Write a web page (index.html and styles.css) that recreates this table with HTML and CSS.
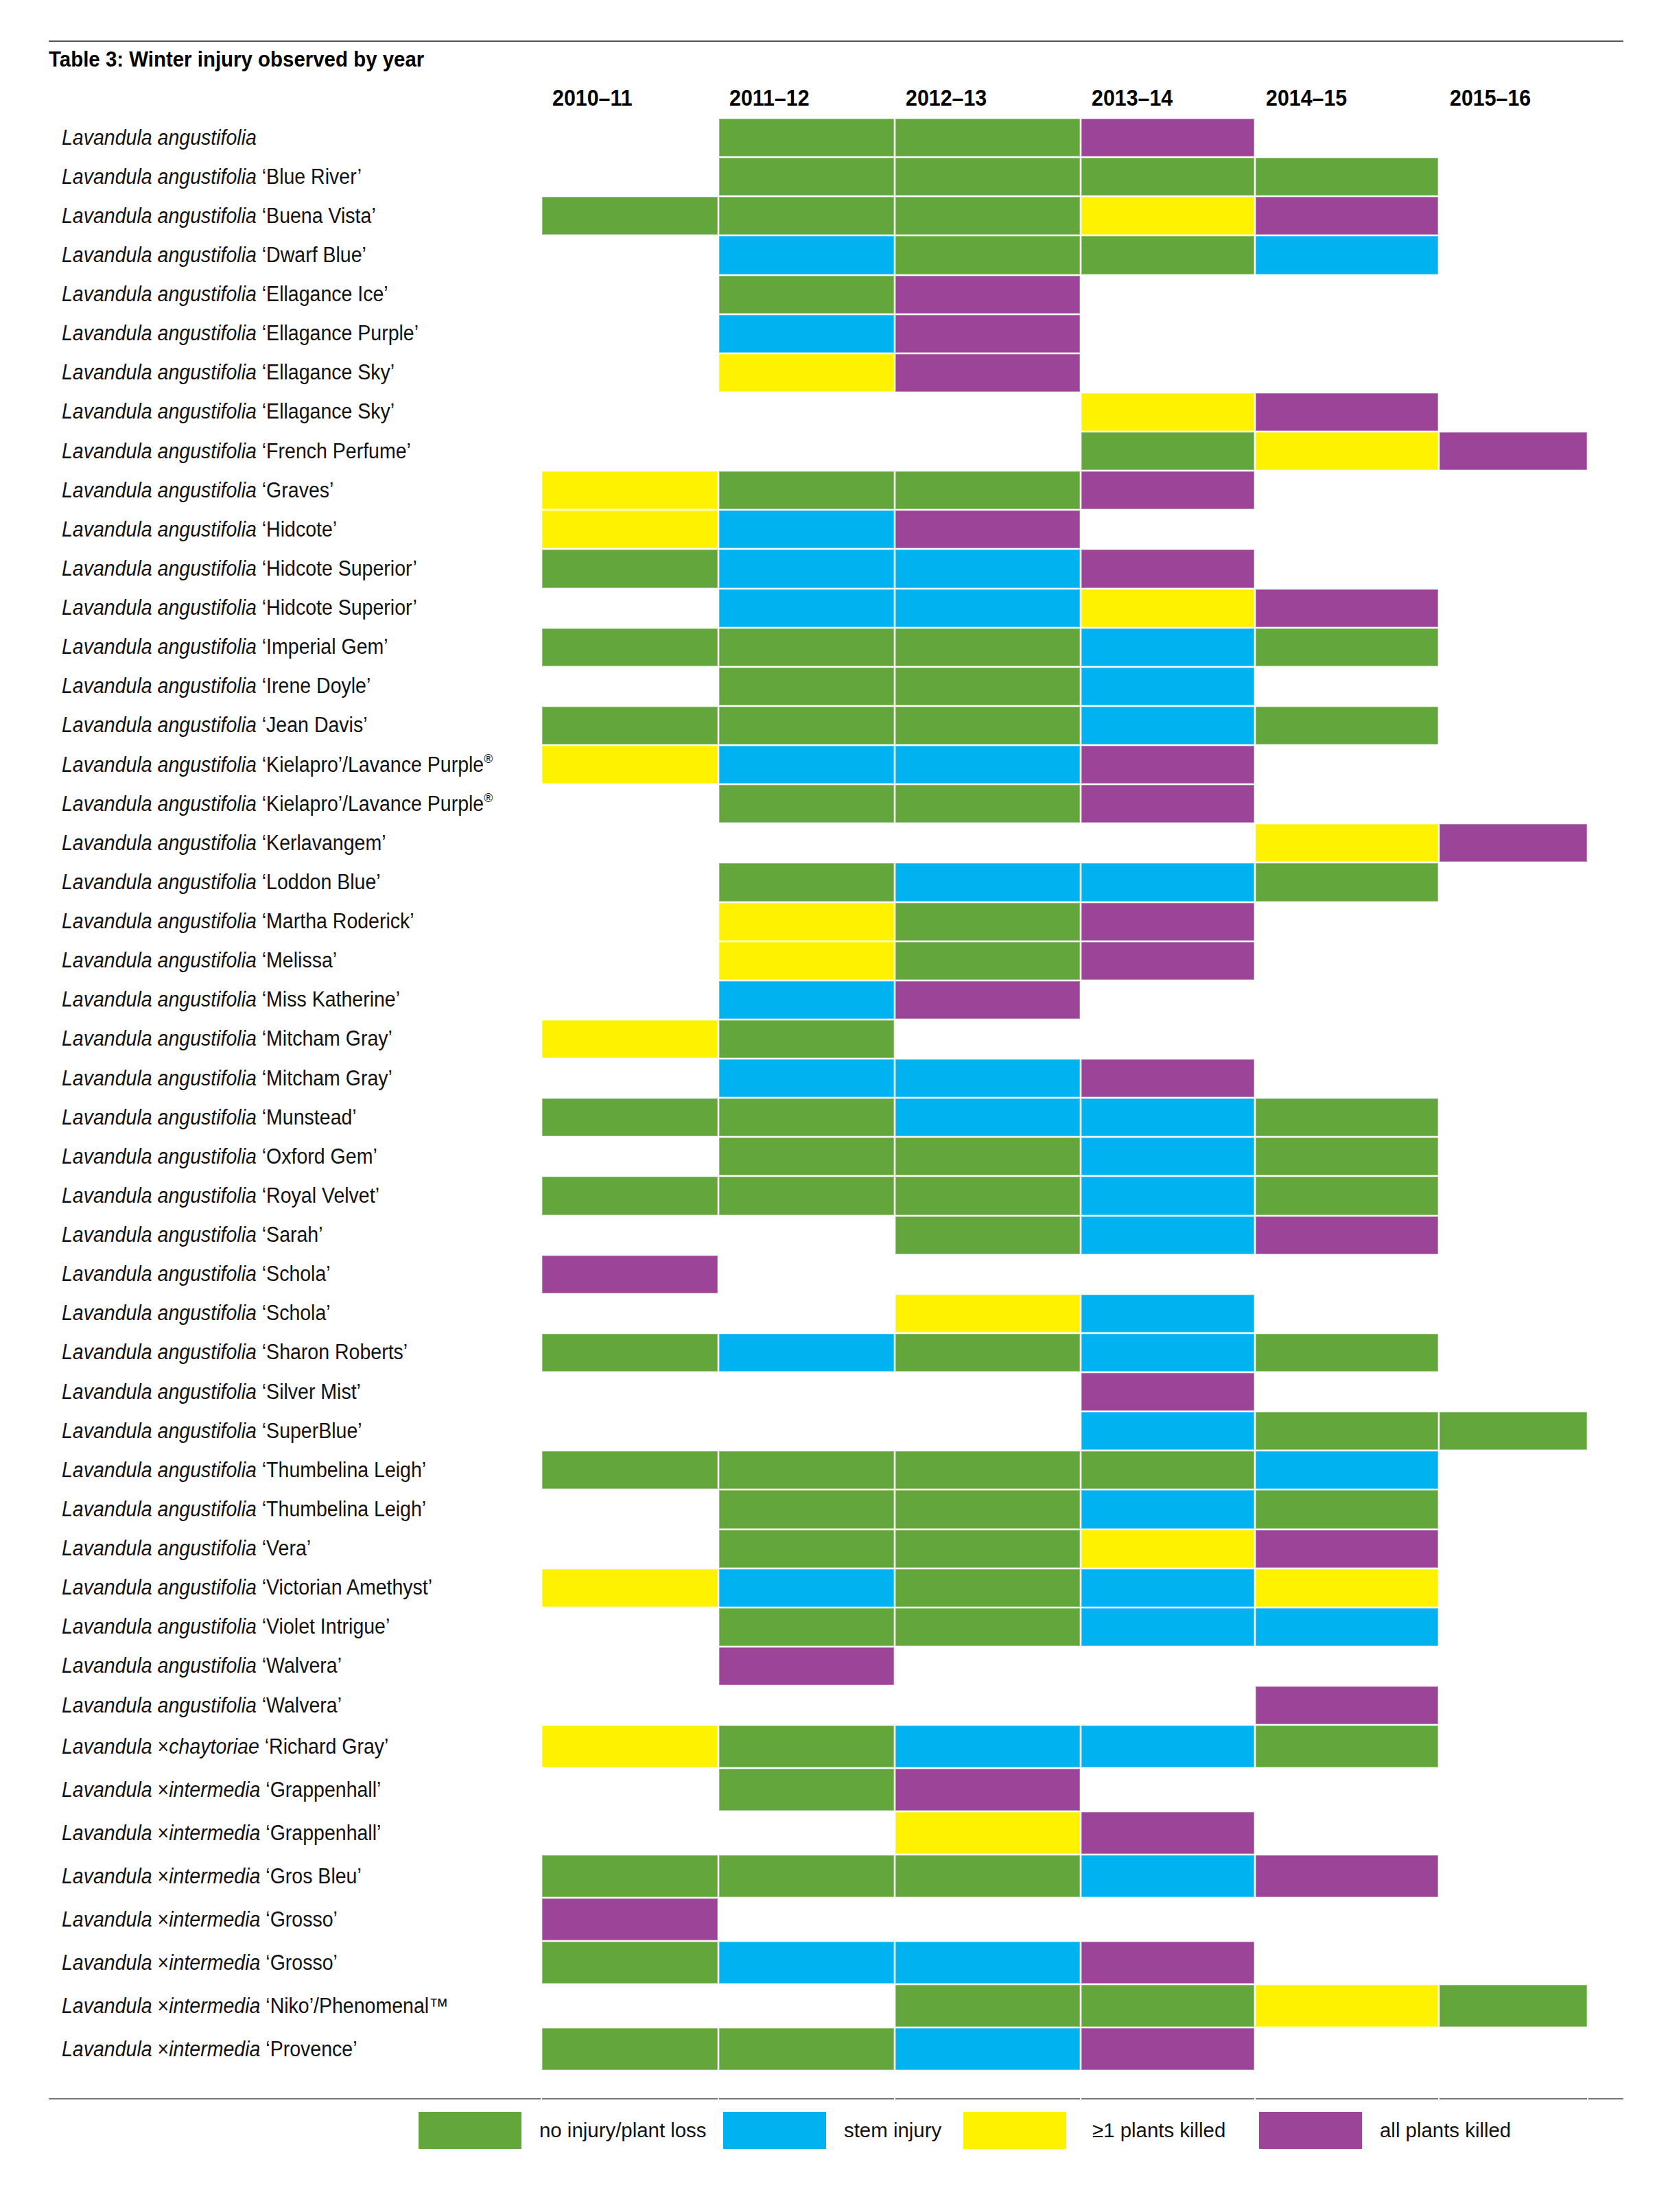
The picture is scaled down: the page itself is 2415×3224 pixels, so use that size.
FILE: index.html
```html
<!DOCTYPE html>
<html lang="en">
<head>
<meta charset="utf-8">
<title>Table 3: Winter injury observed by year</title>
<link rel="stylesheet" href="styles.css">
</head>
<body>
<div class="page">
  <div class="rule-top"></div>
  <h1 class="title"><span class="nm">Table 3: Winter injury observed by year</span></h1>

  <div class="table">
    <div class="hd"></div>
    <div class="hd yr"><span class="nm">2010–11</span></div>
    <div class="hd yr"><span class="nm">2011–12</span></div>
    <div class="hd yr"><span class="nm">2012–13</span></div>
    <div class="hd yr"><span class="nm">2013–14</span></div>
    <div class="hd yr"><span class="nm">2014–15</span></div>
    <div class="hd yr"><span class="nm">2015–16</span></div>

    <div class="lab"><span class="nm"><i>Lavandula angustifolia</i></span></div>
    <div class="c"></div><div class="c g"></div><div class="c g"></div><div class="c p"></div><div class="c"></div><div class="c"></div>

    <div class="lab"><span class="nm"><i>Lavandula angustifolia</i> ‘Blue River’</span></div>
    <div class="c"></div><div class="c g"></div><div class="c g"></div><div class="c g"></div><div class="c g"></div><div class="c"></div>

    <div class="lab"><span class="nm"><i>Lavandula angustifolia</i> ‘Buena Vista’</span></div>
    <div class="c g"></div><div class="c g"></div><div class="c g"></div><div class="c y"></div><div class="c p"></div><div class="c"></div>

    <div class="lab"><span class="nm"><i>Lavandula angustifolia</i> ‘Dwarf Blue’</span></div>
    <div class="c"></div><div class="c b"></div><div class="c g"></div><div class="c g"></div><div class="c b"></div><div class="c"></div>

    <div class="lab"><span class="nm"><i>Lavandula angustifolia</i> ‘Ellagance Ice’</span></div>
    <div class="c"></div><div class="c g"></div><div class="c p"></div><div class="c"></div><div class="c"></div><div class="c"></div>

    <div class="lab"><span class="nm"><i>Lavandula angustifolia</i> ‘Ellagance Purple’</span></div>
    <div class="c"></div><div class="c b"></div><div class="c p"></div><div class="c"></div><div class="c"></div><div class="c"></div>

    <div class="lab"><span class="nm"><i>Lavandula angustifolia</i> ‘Ellagance Sky’</span></div>
    <div class="c"></div><div class="c y"></div><div class="c p"></div><div class="c"></div><div class="c"></div><div class="c"></div>

    <div class="lab"><span class="nm"><i>Lavandula angustifolia</i> ‘Ellagance Sky’</span></div>
    <div class="c"></div><div class="c"></div><div class="c"></div><div class="c y"></div><div class="c p"></div><div class="c"></div>

    <div class="lab"><span class="nm"><i>Lavandula angustifolia</i> ‘French Perfume’</span></div>
    <div class="c"></div><div class="c"></div><div class="c"></div><div class="c g"></div><div class="c y"></div><div class="c p"></div>

    <div class="lab"><span class="nm"><i>Lavandula angustifolia</i> ‘Graves’</span></div>
    <div class="c y"></div><div class="c g"></div><div class="c g"></div><div class="c p"></div><div class="c"></div><div class="c"></div>

    <div class="lab"><span class="nm"><i>Lavandula angustifolia</i> ‘Hidcote’</span></div>
    <div class="c y"></div><div class="c b"></div><div class="c p"></div><div class="c"></div><div class="c"></div><div class="c"></div>

    <div class="lab"><span class="nm"><i>Lavandula angustifolia</i> ‘Hidcote Superior’</span></div>
    <div class="c g"></div><div class="c b"></div><div class="c b"></div><div class="c p"></div><div class="c"></div><div class="c"></div>

    <div class="lab"><span class="nm"><i>Lavandula angustifolia</i> ‘Hidcote Superior’</span></div>
    <div class="c"></div><div class="c b"></div><div class="c b"></div><div class="c y"></div><div class="c p"></div><div class="c"></div>

    <div class="lab"><span class="nm"><i>Lavandula angustifolia</i> ‘Imperial Gem’</span></div>
    <div class="c g"></div><div class="c g"></div><div class="c g"></div><div class="c b"></div><div class="c g"></div><div class="c"></div>

    <div class="lab"><span class="nm"><i>Lavandula angustifolia</i> ‘Irene Doyle’</span></div>
    <div class="c"></div><div class="c g"></div><div class="c g"></div><div class="c b"></div><div class="c"></div><div class="c"></div>

    <div class="lab"><span class="nm"><i>Lavandula angustifolia</i> ‘Jean Davis’</span></div>
    <div class="c g"></div><div class="c g"></div><div class="c g"></div><div class="c b"></div><div class="c g"></div><div class="c"></div>

    <div class="lab"><span class="nm"><i>Lavandula angustifolia</i> ‘Kielapro’/Lavance Purple<sup>®</sup></span></div>
    <div class="c y"></div><div class="c b"></div><div class="c b"></div><div class="c p"></div><div class="c"></div><div class="c"></div>

    <div class="lab"><span class="nm"><i>Lavandula angustifolia</i> ‘Kielapro’/Lavance Purple<sup>®</sup></span></div>
    <div class="c"></div><div class="c g"></div><div class="c g"></div><div class="c p"></div><div class="c"></div><div class="c"></div>

    <div class="lab"><span class="nm"><i>Lavandula angustifolia</i> ‘Kerlavangem’</span></div>
    <div class="c"></div><div class="c"></div><div class="c"></div><div class="c"></div><div class="c y"></div><div class="c p"></div>

    <div class="lab"><span class="nm"><i>Lavandula angustifolia</i> ‘Loddon Blue’</span></div>
    <div class="c"></div><div class="c g"></div><div class="c b"></div><div class="c b"></div><div class="c g"></div><div class="c"></div>

    <div class="lab"><span class="nm"><i>Lavandula angustifolia</i> ‘Martha Roderick’</span></div>
    <div class="c"></div><div class="c y"></div><div class="c g"></div><div class="c p"></div><div class="c"></div><div class="c"></div>

    <div class="lab"><span class="nm"><i>Lavandula angustifolia</i> ‘Melissa’</span></div>
    <div class="c"></div><div class="c y"></div><div class="c g"></div><div class="c p"></div><div class="c"></div><div class="c"></div>

    <div class="lab"><span class="nm"><i>Lavandula angustifolia</i> ‘Miss Katherine’</span></div>
    <div class="c"></div><div class="c b"></div><div class="c p"></div><div class="c"></div><div class="c"></div><div class="c"></div>

    <div class="lab"><span class="nm"><i>Lavandula angustifolia</i> ‘Mitcham Gray’</span></div>
    <div class="c y"></div><div class="c g"></div><div class="c"></div><div class="c"></div><div class="c"></div><div class="c"></div>

    <div class="lab"><span class="nm"><i>Lavandula angustifolia</i> ‘Mitcham Gray’</span></div>
    <div class="c"></div><div class="c b"></div><div class="c b"></div><div class="c p"></div><div class="c"></div><div class="c"></div>

    <div class="lab"><span class="nm"><i>Lavandula angustifolia</i> ‘Munstead’</span></div>
    <div class="c g"></div><div class="c g"></div><div class="c b"></div><div class="c b"></div><div class="c g"></div><div class="c"></div>

    <div class="lab"><span class="nm"><i>Lavandula angustifolia</i> ‘Oxford Gem’</span></div>
    <div class="c"></div><div class="c g"></div><div class="c g"></div><div class="c b"></div><div class="c g"></div><div class="c"></div>

    <div class="lab"><span class="nm"><i>Lavandula angustifolia</i> ‘Royal Velvet’</span></div>
    <div class="c g"></div><div class="c g"></div><div class="c g"></div><div class="c b"></div><div class="c g"></div><div class="c"></div>

    <div class="lab"><span class="nm"><i>Lavandula angustifolia</i> ‘Sarah’</span></div>
    <div class="c"></div><div class="c"></div><div class="c g"></div><div class="c b"></div><div class="c p"></div><div class="c"></div>

    <div class="lab"><span class="nm"><i>Lavandula angustifolia</i> ‘Schola’</span></div>
    <div class="c p"></div><div class="c"></div><div class="c"></div><div class="c"></div><div class="c"></div><div class="c"></div>

    <div class="lab"><span class="nm"><i>Lavandula angustifolia</i> ‘Schola’</span></div>
    <div class="c"></div><div class="c"></div><div class="c y"></div><div class="c b"></div><div class="c"></div><div class="c"></div>

    <div class="lab"><span class="nm"><i>Lavandula angustifolia</i> ‘Sharon Roberts’</span></div>
    <div class="c g"></div><div class="c b"></div><div class="c g"></div><div class="c b"></div><div class="c g"></div><div class="c"></div>

    <div class="lab"><span class="nm"><i>Lavandula angustifolia</i> ‘Silver Mist’</span></div>
    <div class="c"></div><div class="c"></div><div class="c"></div><div class="c p"></div><div class="c"></div><div class="c"></div>

    <div class="lab"><span class="nm"><i>Lavandula angustifolia</i> ‘SuperBlue’</span></div>
    <div class="c"></div><div class="c"></div><div class="c"></div><div class="c b"></div><div class="c g"></div><div class="c g"></div>

    <div class="lab"><span class="nm"><i>Lavandula angustifolia</i> ‘Thumbelina Leigh’</span></div>
    <div class="c g"></div><div class="c g"></div><div class="c g"></div><div class="c g"></div><div class="c b"></div><div class="c"></div>

    <div class="lab"><span class="nm"><i>Lavandula angustifolia</i> ‘Thumbelina Leigh’</span></div>
    <div class="c"></div><div class="c g"></div><div class="c g"></div><div class="c b"></div><div class="c g"></div><div class="c"></div>

    <div class="lab"><span class="nm"><i>Lavandula angustifolia</i> ‘Vera’</span></div>
    <div class="c"></div><div class="c g"></div><div class="c g"></div><div class="c y"></div><div class="c p"></div><div class="c"></div>

    <div class="lab"><span class="nm"><i>Lavandula angustifolia</i> ‘Victorian Amethyst’</span></div>
    <div class="c y"></div><div class="c b"></div><div class="c g"></div><div class="c b"></div><div class="c y"></div><div class="c"></div>

    <div class="lab"><span class="nm"><i>Lavandula angustifolia</i> ‘Violet Intrigue’</span></div>
    <div class="c"></div><div class="c g"></div><div class="c g"></div><div class="c b"></div><div class="c b"></div><div class="c"></div>

    <div class="lab"><span class="nm"><i>Lavandula angustifolia</i> ‘Walvera’</span></div>
    <div class="c"></div><div class="c p"></div><div class="c"></div><div class="c"></div><div class="c"></div><div class="c"></div>

    <div class="lab"><span class="nm"><i>Lavandula angustifolia</i> ‘Walvera’</span></div>
    <div class="c"></div><div class="c"></div><div class="c"></div><div class="c"></div><div class="c p"></div><div class="c"></div>

    <div class="lab"><span class="nm"><i>Lavandula</i> ×<i>chaytoriae</i> ‘Richard Gray’</span></div>
    <div class="c y"></div><div class="c g"></div><div class="c b"></div><div class="c b"></div><div class="c g"></div><div class="c"></div>

    <div class="lab"><span class="nm"><i>Lavandula</i> ×<i>intermedia</i> ‘Grappenhall’</span></div>
    <div class="c"></div><div class="c g"></div><div class="c p"></div><div class="c"></div><div class="c"></div><div class="c"></div>

    <div class="lab"><span class="nm"><i>Lavandula</i> ×<i>intermedia</i> ‘Grappenhall’</span></div>
    <div class="c"></div><div class="c"></div><div class="c y"></div><div class="c p"></div><div class="c"></div><div class="c"></div>

    <div class="lab"><span class="nm"><i>Lavandula</i> ×<i>intermedia</i> ‘Gros Bleu’</span></div>
    <div class="c g"></div><div class="c g"></div><div class="c g"></div><div class="c b"></div><div class="c p"></div><div class="c"></div>

    <div class="lab"><span class="nm"><i>Lavandula</i> ×<i>intermedia</i> ‘Grosso’</span></div>
    <div class="c p"></div><div class="c"></div><div class="c"></div><div class="c"></div><div class="c"></div><div class="c"></div>

    <div class="lab"><span class="nm"><i>Lavandula</i> ×<i>intermedia</i> ‘Grosso’</span></div>
    <div class="c g"></div><div class="c b"></div><div class="c b"></div><div class="c p"></div><div class="c"></div><div class="c"></div>

    <div class="lab"><span class="nm"><i>Lavandula</i> ×<i>intermedia</i> ‘Niko’/Phenomenal™</span></div>
    <div class="c"></div><div class="c"></div><div class="c g"></div><div class="c g"></div><div class="c y"></div><div class="c g"></div>

    <div class="lab"><span class="nm"><i>Lavandula</i> ×<i>intermedia</i> ‘Provence’</span></div>
    <div class="c g"></div><div class="c g"></div><div class="c b"></div><div class="c p"></div><div class="c"></div><div class="c"></div>
  </div>

  <div class="rule-bottom">
    <span class="seg s0"></span><span class="seg s1"></span><span class="seg s2"></span><span class="seg s3"></span><span class="seg s4"></span><span class="seg s5"></span><span class="seg s6"></span><span class="seg s7"></span>
  </div>

  <div class="legend">
    <div class="key"><span class="sw g"></span><span class="kt"><span class="nm nm-key">no injury/plant loss</span></span></div>
    <div class="key"><span class="sw b"></span><span class="kt"><span class="nm nm-key">stem injury</span></span></div>
    <div class="key"><span class="sw y"></span><span class="kt kt-wide"><span class="nm nm-key">≥1 plants killed</span></span></div>
    <div class="key"><span class="sw p"></span><span class="kt"><span class="nm nm-key">all plants killed</span></span></div>
  </div>
</div>
</body>
</html>
```

FILE: styles.css
```css
:root {
  --green: #63a73c;
  --blue: #00b2ef;
  --yellow: #fff200;
  --purple: #9c4498;
  --w0: 717px;
  --w1: 256px;
  --w2: 255px;
  --w3: 269px;
  --w4: 252px;
  --w5: 266px;
  --w6: 215px;
}

html, body {
  margin: 0;
  padding: 0;
  background: #fff;
}

body {
  font-family: "Liberation Sans", Arial, sans-serif;
  color: #111;
}

/* condensed look: narrow the Arial-metric face */
.nm {
  display: inline-block;
  white-space: nowrap;
  transform: scaleX(0.92);
  transform-origin: 0 50%;
}

.nm-key {
  transform: scaleX(0.98);
}

.page {
  padding: 59px 0 0 71px;
  width: 2295px;
}

.rule-top {
  height: 2px;
  background: #555;
  width: 2295px;
}

.title {
  margin: 7px 0 0 0;
  font-size: 32px;
  line-height: 37px;
  font-weight: bold;
  color: #000;
}

.table {
  margin-top: 13px;
  display: grid;
  grid-template-columns: var(--w0) var(--w1) var(--w2) var(--w3) var(--w4) var(--w5) var(--w6);
  grid-template-rows: 53px repeat(41, 55.125px) repeat(8, 61px);
  column-gap: 2px;
  row-gap: 2px;
}

.hd {
  height: 53px;
}

.yr {
  box-sizing: border-box;
  padding: 6px 0 0 15px;
  font-size: 33px;
  line-height: 38px;
  font-weight: bold;
  color: #000;
}

.lab {
  display: flex;
  align-items: center;
  padding-left: 19px;
  font-size: 31px;
  line-height: 36px;
  color: #111;
}

.lab i {
  font-style: italic;
}

.lab sup {
  font-size: 0.62em;
  line-height: 0;
  vertical-align: 0.7em;
}

.c.g, .sw.g { background: var(--green); }
.c.b, .sw.b { background: var(--blue); }
.c.y, .sw.y { background: var(--yellow); }
.c.p, .sw.p { background: var(--purple); }

.c.g, .c.b, .c.y, .c.p {
  box-shadow: inset 0 0 0 1px rgba(255, 255, 255, 0.3);
}

.rule-bottom {
  margin-top: 41px;
  display: flex;
  gap: 2px;
}

.seg {
  display: block;
  height: 2px;
  background: #777;
}

.s0 { width: var(--w0); }
.s1 { width: var(--w1); }
.s2 { width: var(--w2); }
.s3 { width: var(--w3); }
.s4 { width: var(--w4); }
.s5 { width: var(--w5); }
.s6 { width: var(--w6); }
.s7 { width: 51px; }

.legend {
  margin-top: 18px;
  padding-left: 539px;
  display: grid;
  grid-template-columns: 444px 350px 431px auto;
}

.key {
  display: flex;
  align-items: center;
}

.sw {
  display: block;
  width: 150px;
  height: 54px;
  flex: none;
}

.kt {
  padding-left: 26px;
  font-size: 30px;
  color: #111;
}

.kt-wide {
  padding-left: 38px;
}
```
